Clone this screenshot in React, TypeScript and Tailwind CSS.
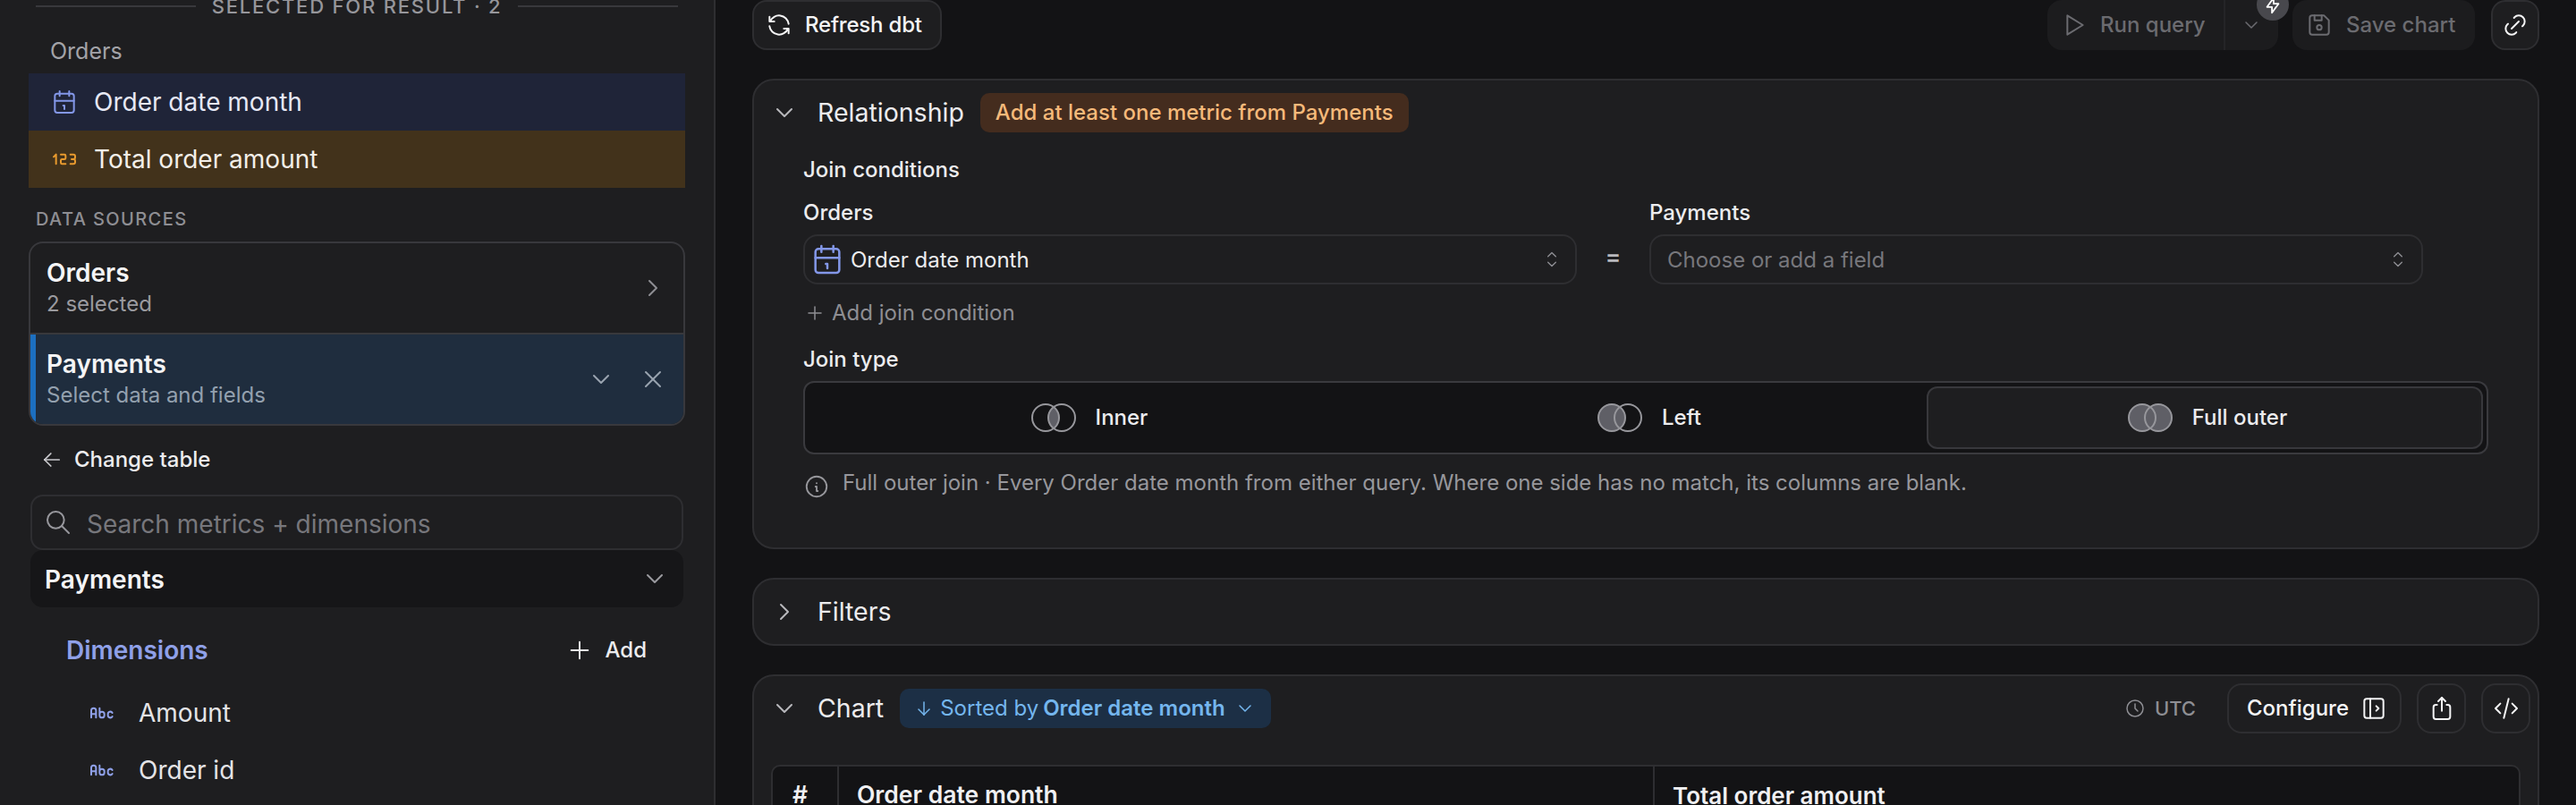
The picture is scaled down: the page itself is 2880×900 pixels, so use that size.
import React from "react";
import {
  TbRefresh, TbPlayerPlay, TbChevronDown, TbChevronRight, TbDeviceFloppy, TbLink, TbBolt, TbSelector, TbPlus,
  TbInfoCircle, TbClock, TbLayoutSidebarLeftExpand, TbShare2, TbCode, TbArrowDown, TbArrowLeft, TbX, TbSearch,
} from "react-icons/tb";

const Cal = ({ size = 32, className = "" }: { size?: number; className?: string }) => (
  <svg width={size} height={size} viewBox="0 0 24 24" fill="none" stroke="currentColor" strokeWidth={1.5} strokeLinecap="round" strokeLinejoin="round" className={className}>
    <path d="M4 7a2 2 0 0 1 2 -2h12a2 2 0 0 1 2 2v12a2 2 0 0 1 -2 2h-12a2 2 0 0 1 -2 -2v-12z" />
    <path d="M16 3v4M8 3v4M4 11h16M11 15h1M12 15v3" />
  </svg>
);
const N123 = () => (
  <svg width={32} height={32} viewBox="0 0 24 24" fill="none" stroke="currentColor" strokeWidth={1.5} strokeLinecap="round" strokeLinejoin="round" className="text-[#e89a2e]">
    <path d="M3 10l2 -2v8M9 8h3a1 1 0 0 1 1 1v2a1 1 0 0 1 -1 1h-2a1 1 0 0 0 -1 1v2a1 1 0 0 0 1 1h3M17 8h2.5a1.5 1.5 0 0 1 1.5 1.5v1a1.5 1.5 0 0 1 -1.5 1.5h-1.5h1.5a1.5 1.5 0 0 1 1.5 1.5v1a1.5 1.5 0 0 1 -1.5 1.5h-2.5" />
  </svg>
);
const Abc = () => (
  <svg width={32} height={32} viewBox="0 0 24 24" fill="none" stroke="currentColor" strokeWidth={1.5} strokeLinecap="round" strokeLinejoin="round" className="text-[#8fa0e8]">
    <path d="M3 16v-6a2 2 0 1 1 4 0v6M3 13h4M10 8v6a2 2 0 1 0 4 0v-1a2 2 0 1 0 -4 0v1M20.732 12a2 2 0 0 0 -3.732 1v1a2 2 0 0 0 3.726 1.01" />
  </svg>
);

const Venn = ({ kind }: { kind: "inner" | "left" | "full" }) => (
  <svg width={50} height={34} viewBox="0 0 50 34" fill="none">
    {kind !== "inner" && <circle cx={16} cy={17} r={15} fill="#5f5f66" />}
    {kind === "full" && <circle cx={34} cy={17} r={15} fill="#5f5f66" />}
    {kind === "inner" && <path d="M25 5a15 15 0 0 1 0 24a15 15 0 0 1 0 -24z" fill="#5f5f66" />}
    <circle cx={16} cy={17} r={15} stroke="#97979c" strokeWidth={2} />
    <circle cx={34} cy={17} r={15} stroke="#97979c" strokeWidth={2} />
  </svg>
);

const Btn = ({ className = "", children }: { className?: string; children: React.ReactNode }) => (
  <div className={"flex items-center h-[56px] rounded-[16px] border-2 border-[#2e2e31] bg-[#1e1e20] text-[#f4f4f5] text-[24px] font-medium " + className}>{children}</div>
);

const SelectBox = ({ children }: { children: React.ReactNode }) => (
  <div className="flex items-center justify-between h-[56px] rounded-[16px] border-2 border-[#2e2e31] bg-[#1e1e20] text-[24px] pr-[13px]">
    <div className="flex items-center min-w-0">{children}</div>
    <TbSelector size={26} strokeWidth={1.25} className="text-[#8e8e93]" />
  </div>
);

const Panel = ({ className = "", children }: { className?: string; children: React.ReactNode }) => (
  <section className={"rounded-[24px] border-2 border-[#2e2e31] bg-[#1e1e20] " + className}>{children}</section>
);

const JoinOption = ({ kind, label, selected }: { kind: "inner" | "left" | "full"; label: string; selected?: boolean }) => (
  <div className={"flex items-center justify-center gap-[22px] pl-[6px] h-[70px] rounded-[12px] text-[24px] font-medium text-[#ececee] " + (selected ? "w-[622px] bg-[#1e1e20] border-2 border-[#38383c]" : "flex-1")}>
    <Venn kind={kind} />
    <span>{label}</span>
  </div>
);

export default function App() {
  return (
    <div className="flex w-[2880px] h-[900px] overflow-hidden bg-[#131315] text-[#f4f4f5]" style={{ fontFamily: "Inter, 'Noto Sans', sans-serif" }}>
      {/* Sidebar */}
      <aside className="w-[800px] shrink-0 h-full overflow-hidden bg-[#1e1e20] border-r-2 border-[#2e2e31]">
        <div className="flex items-center gap-[18px] h-[28px] -mt-[7px] mx-[40px]">
          <div className="flex-1 h-[2px] bg-[#38383c]" />
          <span className="text-[22px] font-medium tracking-[1.8px] text-[#96969b]">SELECTED FOR RESULT · 2</span>
          <div className="flex-1 h-[2px] bg-[#38383c]" />
        </div>
        <div className="ml-[56px] mt-[21px] h-[30px] leading-[30px] text-[25px] text-[#a3a3a8]">Orders</div>
        <div className="mt-[10px] mx-[32px]">
          <div className="flex items-center gap-[17px] h-[64px] pl-[24px] bg-[#1f2438] text-[28px] text-[#e6e8f5]">
            <Cal className="text-[#8397e8]" />
            <span>Order date month</span>
          </div>
          <div className="flex items-center gap-[17px] h-[64px] pl-[24px] bg-[#42321b] text-[28px] text-[#f3efe8]">
            <N123 />
            <span>Total order amount</span>
          </div>
        </div>
        <div className="ml-[40px] mt-[24px] h-[22px] leading-[22px] text-[20px] font-medium tracking-[1.4px] text-[#8e8e93]">DATA SOURCES</div>
        <div className="mt-[14px] mx-[32px] rounded-[16px] border-2 border-[#38383c] overflow-hidden">
          <div className="flex items-center justify-between h-[102px] pl-[18px] pr-[18px] border-b-2 border-[#38383c]">
            <div>
              <div className="text-[28px] font-semibold leading-[36px] text-[#f4f4f5]">Orders</div>
              <div className="text-[24px] leading-[34px] text-[#9a9a9f]">2 selected</div>
            </div>
            <TbChevronRight size={32} strokeWidth={1.5} className="text-[#8e8e93]" />
          </div>
          <div className="flex items-center justify-between h-[100px] pl-[12px] pr-[18px] bg-[#1f2d3e] border-l-[6px] border-[#1c6fc0]">
            <div>
              <div className="text-[28px] font-semibold leading-[36px] text-[#f4f4f5]">Payments</div>
              <div className="text-[24px] leading-[34px] text-[#93a0ae]">Select data and fields</div>
            </div>
            <div className="flex items-center gap-[26px] text-[#9aa4b0]">
              <TbChevronDown size={32} strokeWidth={1.5} />
              <TbX size={32} strokeWidth={1.5} />
            </div>
          </div>
        </div>
        <div className="flex items-center gap-[11px] ml-[44px] mt-[21px] h-[34px] text-[24px] font-medium text-[#ececee]">
          <TbArrowLeft size={28} strokeWidth={1.5} className="text-[#c8c8cc]" />
          <span>Change table</span>
        </div>
        <div className="flex items-center gap-[16px] mt-[22px] mx-[34px] h-[62px] pl-[13px] rounded-[14px] border-2 border-[#2e2e31] text-[28px] text-[#77777c]">
          <TbSearch size={32} strokeWidth={1.5} className="text-[#97979c]" />
          <span className="pt-[3px]">Search metrics + dimensions</span>
        </div>
        <div className="flex items-center justify-between mx-[34px] h-[64px] pl-[16px] pr-[16px] rounded-[14px] bg-[#161618] text-[28px] font-semibold text-[#f4f4f5]">
          <span className="pt-[2px]">Payments</span>
          <TbChevronDown size={32} strokeWidth={1.5} className="text-[#9a9a9f]" />
        </div>
        <div className="flex items-center justify-between ml-[74px] mr-[75px] mt-[29px] h-[38px]">
          <span className="text-[28px] font-semibold text-[#8fa0e8]">Dimensions</span>
          <div className="flex items-center gap-[13px] text-[24px] font-medium text-[#ececee]">
            <TbPlus size={32} strokeWidth={1.5} />
            <span>Add</span>
          </div>
        </div>
        <div className="flex items-center gap-[25px] ml-[98px] mt-[32px] h-[38px] text-[28px] text-[#e4e4e7]">
          <Abc />
          <span>Amount</span>
        </div>
        <div className="flex items-center gap-[25px] ml-[98px] mt-[26px] h-[38px] text-[28px] text-[#e4e4e7]">
          <Abc />
          <span>Order id</span>
        </div>
      </aside>

      {/* Main */}
      <main className="flex-1 min-w-0 h-full overflow-hidden px-[41px]">
        <div className="flex items-center h-[56px]">
          <Btn className="gap-[13px] pl-[12px] w-[212px] tracking-[-0.2px]">
            <TbRefresh size={32} strokeWidth={1.5} className="text-[#f4f4f5]" />
            <span>Refresh dbt</span>
          </Btn>
          <div className="flex items-center ml-auto">
            <div className="relative flex items-center h-[56px] w-[258px] rounded-[16px] bg-[#1c1c1e] text-[24px] font-medium text-[#6b6b70]">
              <div className="flex items-center gap-[14px] pl-[13px] w-[199px] h-full border-r-2 border-[#242427]">
                <TbPlayerPlay size={32} strokeWidth={1.5} />
                <span>Run query</span>
              </div>
              <TbChevronDown size={24} strokeWidth={1.5} className="ml-[17px]" />
              <div className="absolute -top-[13px] left-[234px] flex items-center justify-center w-[36px] h-[36px] rounded-full bg-[#48484d] text-white pt-[2px]">
                <TbBolt size={22} strokeWidth={2} />
              </div>
            </div>
            <div className="flex items-center gap-[14px] ml-[16px] pl-[14px] h-[56px] w-[204px] rounded-[16px] bg-[#1c1c1e] text-[24px] font-medium text-[#6b6b70]">
              <TbDeviceFloppy size={32} strokeWidth={1.5} />
              <span>Save chart</span>
            </div>
            <Btn className="ml-[18px] w-[54px] justify-center">
              <TbLink size={32} strokeWidth={1.5} />
            </Btn>
          </div>
        </div>

        <Panel className="mt-[32px] h-[526px]">
          <div className="flex items-center mt-[14px] h-[44px] pl-[18px]">
            <TbChevronDown size={32} strokeWidth={1.5} className="text-[#b8b8bc]" />
            <span className="ml-[21px] text-[28.5px] text-[#ececee]">Relationship</span>
            <span className="ml-[18px] flex items-center h-[44px] px-[17px] rounded-[10px] bg-[#442c1e] text-[24px] font-medium text-[#f5b97a]">Add at least one metric from Payments</span>
          </div>
          <div className="ml-[55px] mr-[56px]">
            <div className="mt-[24px] h-[36px] leading-[36px] text-[24px] font-medium text-[#ececee]">Join conditions</div>
            <div className="flex mt-[16px]">
              <div className="w-[865px]">
                <div className="h-[28px] leading-[28px] text-[24px] font-medium text-[#ececee]">Orders</div>
                <div className="mt-[10px]">
                  <SelectBox>
                    <Cal size={40} className="ml-[5px] text-[#8397e8]" />
                    <span className="ml-[6px] pt-[2px] text-[#ececee]">Order date month</span>
                  </SelectBox>
                </div>
              </div>
              <div className="w-[81px] flex items-end justify-center h-[94px] pb-[12px] text-[26px] font-semibold text-[#b8b8bc]">=</div>
              <div className="w-[865px]">
                <div className="h-[28px] leading-[28px] text-[24px] font-medium text-[#ececee]">Payments</div>
                <div className="mt-[10px]">
                  <SelectBox>
                    <span className="ml-[18px] pt-[2px] text-[#77777c]">Choose or add a field</span>
                  </SelectBox>
                </div>
              </div>
            </div>
            <div className="flex items-center gap-[7px] mt-[16px] ml-[1px] h-[32px] text-[24px] text-[#8e8e93]">
              <TbPlus size={24} strokeWidth={1.5} />
              <span>Add join condition</span>
            </div>
            <div className="mt-[20px] h-[32px] leading-[32px] text-[24px] font-medium text-[#ececee]">Join type</div>
            <div className="flex items-center mt-[8px] w-[1884px] h-[82px] pl-[2px] pr-[4px] rounded-[12px] border-2 border-[#3a3a3e] bg-[#131315]">
              <JoinOption kind="inner" label="Inner" />
              <JoinOption kind="left" label="Left" />
              <JoinOption kind="full" label="Full outer" selected />
            </div>
            <div className="flex items-start gap-[14px] mt-[15px] text-[24px] leading-[34px] text-[#97979c]">
              <TbInfoCircle size={30} strokeWidth={1.5} className="mt-[6px]" />
              <span>Full outer join · Every Order date month from either query. Where one side has no match, its columns are blank.</span>
            </div>
          </div>
        </Panel>

        <Panel className="mt-[32px] h-[76px] flex items-center pl-[18px]">
          <TbChevronRight size={32} strokeWidth={1.5} className="text-[#b8b8bc]" />
          <span className="ml-[21px] text-[28.5px] text-[#ececee]">Filters</span>
        </Panel>

        <Panel className="mt-[32px] h-[300px]">
          <div className="flex items-center mt-[14px] h-[44px] pl-[18px] pr-[8px]">
            <TbChevronDown size={32} strokeWidth={1.5} className="text-[#b8b8bc]" />
            <span className="ml-[21px] text-[28.5px] text-[#ececee]">Chart</span>
            <span className="ml-[18px] flex items-center h-[44px] pl-[15px] pr-[17px] rounded-[10px] bg-[#1c2f45] text-[24px] text-[#74b6ee]">
              <TbArrowDown size={24} strokeWidth={1.5} />
              <span className="ml-[6px]">Sorted by</span>
              <span className="ml-[5px] font-semibold">Order date month</span>
              <TbChevronDown size={24} strokeWidth={1.5} className="ml-[10px]" />
            </span>
            <div className="ml-auto flex items-center text-[#8e8e93]">
              <TbClock size={24} strokeWidth={1.5} />
              <span className="ml-[10px] text-[22px] font-medium">UTC</span>
              <Btn className="ml-[35px] gap-[12px] pl-[20px] w-[195px]">
                <span>Configure</span>
                <TbLayoutSidebarLeftExpand size={32} strokeWidth={1.5} />
              </Btn>
              <Btn className="ml-[17px] w-[55px] justify-center">
                <TbShare2 size={32} strokeWidth={1.5} />
              </Btn>
              <Btn className="ml-[17px] w-[55px] justify-center">
                <TbCode size={32} strokeWidth={1.5} />
              </Btn>
            </div>
          </div>
          <div className="mt-[41px] mx-[19px] rounded-t-[10px] border-2 border-[#2e2e31] bg-[#131315] flex h-[200px] font-semibold text-[#f0f0f2]">
            <div className="w-[74px] h-full border-r-2 border-[#2e2e31] pl-[22px] pt-[12px] text-[26.5px]">#</div>
            <div className="w-[912px] h-full border-r-2 border-[#2e2e31] pl-[20px] pt-[12px] text-[26.5px]">Order date month</div>
            <div className="flex-1 pl-[20px] pt-[13px] text-[26px]">Total order amount</div>
          </div>
        </Panel>
      </main>
    </div>
  );
}
